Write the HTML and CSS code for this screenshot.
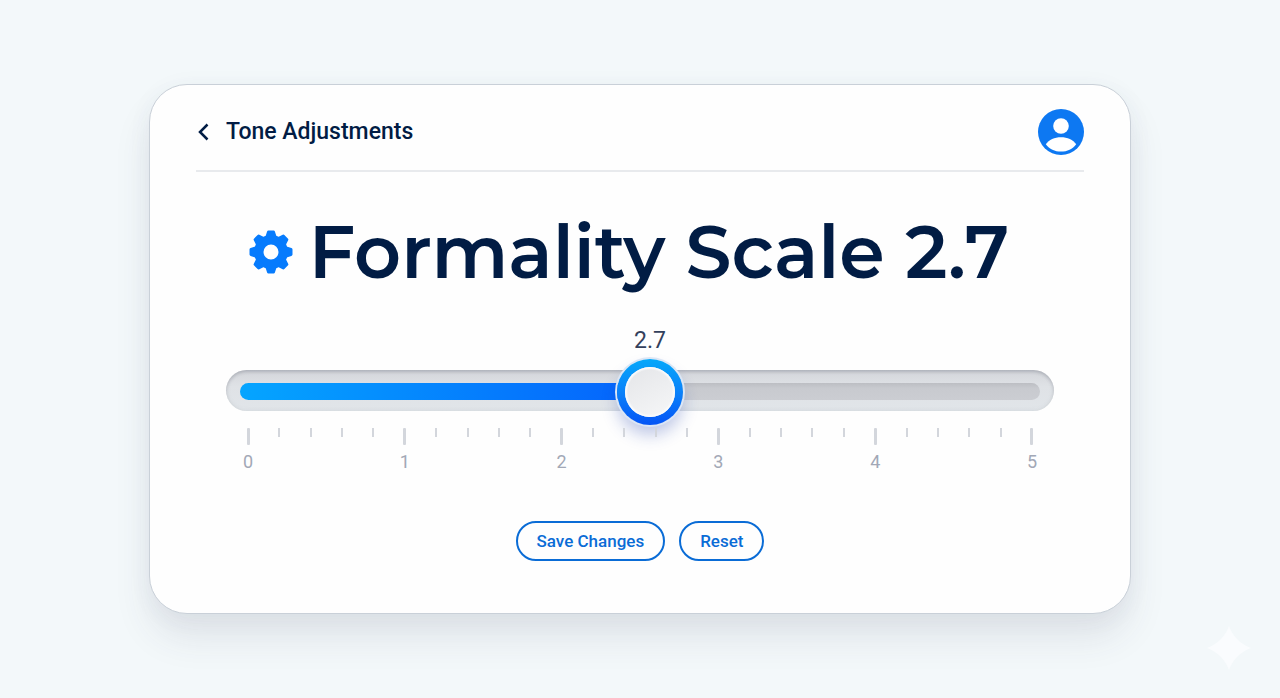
FILE: index.html
```html
<!DOCTYPE html>
<html lang="en">

<head>
  <meta charset="utf-8">
  <meta name="viewport" content="width=device-width, initial-scale=1">
  <title>Tone Adjustments</title>
  <link rel="stylesheet" href="styles.css">
</head>

<body>
  <main class="card">
    <header class="header">
      <a class="back" href="#">
        <svg width="14" height="18" viewBox="0 0 14 18" aria-hidden="true">
          <path d="M11.500 1.500 4 9l7.500 7.500" fill="none" stroke="currentColor" stroke-width="2.500" />
        </svg>
        Tone Adjustments
      </a>
      <button class="avatar" type="button" aria-label="Account">
        <svg width="46" height="46" viewBox="0 0 46 46" aria-hidden="true">
          <circle cx="23" cy="23" r="23" fill="#0d78f2" />
          <circle cx="23" cy="17" r="7.8" fill="#fff" />
          <path d="M7.8 35.2C11 30.600 16.500 28.200 23 28.200s12 2.400 15.200 7C34.600 40 29.200 42.600 23 42.600S11.400 40 7.800 35.200z" fill="#fff" />
        </svg>
      </button>
    </header>

    <form class="scale">
      <div class="title">
        <svg class="gear" width="44" height="44" viewBox="-22 -22 44 44" aria-hidden="true">
          <defs>
            <path id="tooth" d="M-6-14-3.900-20.400Q-3.600-21.500-2.600-21.500H2.600Q3.600-21.500 3.900-20.400L6-14z" />
          </defs>
          <g fill="#067bfd">
            <circle r="12.200" fill="none" stroke="#067bfd" stroke-width="9.400" />
            <use href="#tooth" />
            <use href="#tooth" transform="rotate(45)" />
            <use href="#tooth" transform="rotate(90)" />
            <use href="#tooth" transform="rotate(135)" />
            <use href="#tooth" transform="rotate(180)" />
            <use href="#tooth" transform="rotate(225)" />
            <use href="#tooth" transform="rotate(270)" />
            <use href="#tooth" transform="rotate(315)" />
          </g>
        </svg>
        <h1>Formality Scale 2.7</h1>
      </div>

      <div class="slider">
        <output class="value" for="formality">2.7</output>
        <input class="range" id="formality" type="range" min="0" max="5" step="any" value="2.565" aria-label="Formality">
        <ul class="ticks">
          <li class="major">0</li>
          <li></li>
          <li></li>
          <li></li>
          <li></li>
          <li class="major">1</li>
          <li></li>
          <li></li>
          <li></li>
          <li></li>
          <li class="major">2</li>
          <li></li>
          <li></li>
          <li></li>
          <li></li>
          <li class="major">3</li>
          <li></li>
          <li></li>
          <li></li>
          <li></li>
          <li class="major">4</li>
          <li></li>
          <li></li>
          <li></li>
          <li></li>
          <li class="major">5</li>
        </ul>
      </div>

      <div class="actions">
        <button class="btn" type="button">Save Changes</button>
        <button class="btn" type="reset">Reset</button>
      </div>
    </form>
  </main>

  <svg class="sparkle" width="44" height="44" viewBox="0 0 44 44" aria-hidden="true">
    <path d="M22 0c3.500 10 12 18.500 22 22-10 3.500-18.500 12-22 22C18.500 34 10 25.500 0 22 10 18.500 18.500 10 22 0z" fill="#fafcfe" />
  </svg>
</body>

</html>
```
FILE: styles.css
```css
* {
  box-sizing: border-box;
}

body {
  min-height: 100vh;
  margin: 0;
  padding: 24px;
  display: flex;
  align-items: center;
  justify-content: center;
  background: #f3f8fa;
  color: #011c44;
  font-family: Roboto, "Liberation Sans", sans-serif;
}

.card {
  width: 100%;
  max-width: 982px;
  padding: 0 46px 52px;
  background: #fefefe;
  border: 1px solid #c9d0d8;
  border-radius: 38px;
  box-shadow: 0 24px 36px rgba(60, 60, 90, 0.1), 0 4px 24px rgba(60, 80, 110, 0.05);
}

.header {
  display: flex;
  align-items: center;
  justify-content: space-between;
  padding: 24px 0 15px;
  border-bottom: 2px solid #e8eaed;
}

.back {
  display: flex;
  align-items: center;
  gap: 16px;
  color: inherit;
  font-size: 23px;
  font-weight: 500;
  line-height: 28px;
  text-decoration: none;
}

.avatar {
  padding: 0;
  border: 0;
  border-radius: 50%;
  background: none;
  line-height: 0;
  cursor: pointer;
}

.title {
  display: flex;
  align-items: center;
  justify-content: center;
  gap: 16px;
  padding: 35px 22px 0 0;
}

h1 {
  margin: 0;
  font-family: Montserrat, Inter, sans-serif;
  font-size: 73px;
  font-weight: 600;
  line-height: 90px;
  white-space: nowrap;
}

.gear {
  flex: none;
}

.slider {
  margin: 28px 30px 0;
}

.value {
  display: block;
  padding-left: 20px;
  color: #33405c;
  font-size: 23px;
  line-height: 32px;
  text-align: center;
}

.range {
  display: block;
  width: 100%;
  height: 41px;
  margin: 13px 0 17px;
  padding: 2px 14px 0;
  appearance: none;
  background: linear-gradient(#d3d5da, #dfe2e6 40%, #e1e5e9);
  border-radius: 21px;
  box-shadow: inset 0 2px 3px rgba(90, 95, 110, 0.25), inset 0 0 5px rgba(90, 95, 110, 0.1);
  cursor: pointer;
}

.range::-webkit-slider-runnable-track {
  height: 17px;
  border-radius: 9px;
  background:
    linear-gradient(90deg, #05a5ff, #0562fc) 0 0 / 51% 100% no-repeat,
    linear-gradient(#bcbec3, #c8cacf 30%, #cbcdd2);
}

.range::-webkit-slider-thumb {
  appearance: none;
  width: 66px;
  height: 66px;
  margin-top: -24px;
  border: 8px solid transparent;
  border-radius: 50%;
  background:
    radial-gradient(circle, transparent 22px, #f9fafb 24px) padding-box,
    linear-gradient(150deg, #e4e5e8, #f6f7f8) padding-box,
    linear-gradient(#05a8fa, #0a82fa 50%, #0555f5) border-box;
  box-shadow: 0 0 0 2px #dbe6f5, 0 10px 16px rgba(30, 60, 170, 0.28);
}

.ticks {
  display: flex;
  justify-content: space-between;
  margin: 0;
  padding: 0 20px;
  list-style: none;
  color: #a2a8b6;
  font-size: 18px;
  line-height: 24px;
}

.ticks li {
  display: flex;
  flex-direction: column;
  align-items: center;
  width: 4px;
  height: 42px;
}

.ticks li::before {
  content: "";
  flex: none;
  width: 2px;
  height: 9px;
  background: #d3d6dc;
}

.ticks .major::before {
  width: 3px;
  height: 17px;
  margin-bottom: 5px;
  border-radius: 1px;
}

.actions {
  display: flex;
  justify-content: center;
  gap: 14px;
  margin-top: 51px;
}

.btn {
  height: 40px;
  padding: 0 19px;
  border: 2px solid #0a6cd6;
  border-radius: 20px;
  background: #fefefe;
  color: #0a6cd6;
  font: 500 17px/24px Roboto, "Liberation Sans", sans-serif;
  cursor: pointer;
}

.sparkle {
  position: absolute;
  right: 29px;
  bottom: 28px;
}
```
